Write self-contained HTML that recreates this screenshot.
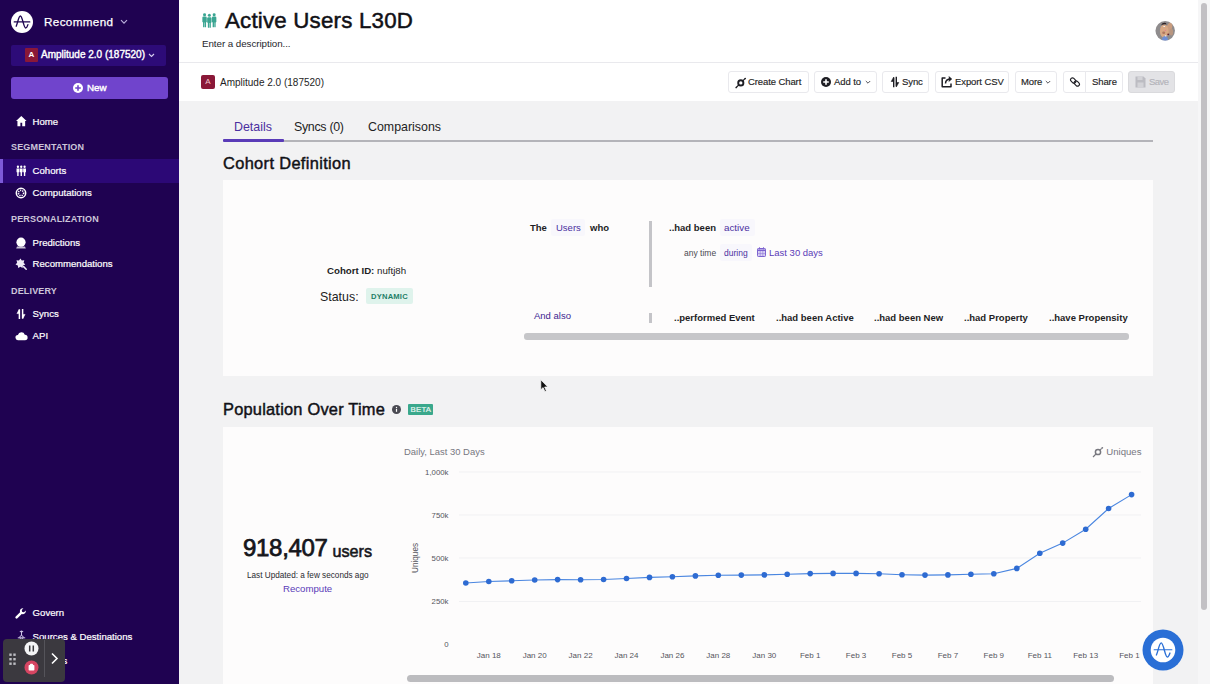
<!DOCTYPE html>
<html><head><meta charset="utf-8">
<style>
*{box-sizing:border-box;margin:0;padding:0}
html,body{width:1210px;height:684px;overflow:hidden;background:#f2f2f3;font-family:"Liberation Sans",sans-serif;color:#1e1e24}
.abs{position:absolute}
#side{position:absolute;left:0;top:0;width:179px;height:684px;background:#1f0251;color:#fff}
.nav{position:absolute;left:32.600px;font-size:9.6px;color:#fff;-webkit-text-stroke:.2px #fff;white-space:nowrap;line-height:12px}
.sec{position:absolute;left:11px;font-size:9px;font-weight:bold;color:#cdc6d9;letter-spacing:.17px;white-space:nowrap;line-height:12px}
.ico{position:absolute}
#hdr{position:absolute;left:179px;top:0;width:1019px;height:63px;background:#fff;border-bottom:1px solid #e9e9ed}
#tool{position:absolute;left:179px;top:63px;width:1019px;height:38px;background:#fff}
.btn{position:absolute;top:71px;height:22px;border:1px solid #e9e9ed;border-radius:3px;background:#fff;font-size:9.5px;letter-spacing:-.1px;-webkit-text-stroke:.15px currentColor;line-height:20px;color:#1e1e24;white-space:nowrap}
.btn span{position:absolute;top:0}
.card{position:absolute;background:#fdfcfc}
.t{position:absolute;white-space:nowrap}
</style></head><body>
<div id="side">
<!-- logo -->
<svg class="ico" style="left:11px;top:11px" width="22" height="22" viewBox="0 0 22 22"><circle cx="11" cy="11" r="11" fill="#fff"/><path d="M3.2 10.900h15.600" stroke="#1e0550" stroke-width="1.2" fill="none" stroke-linecap="round"/><path d="M5.2 15.2C6.6 12.5 7.6 5 9.4 5c2 0 3.3 12 5.3 12 .9 0 1.6-1.6 2.2-3.4" stroke="#1e0550" stroke-width="1.3" fill="none" stroke-linecap="round"/></svg>
<div class="t" style="left:44px;top:13px;font-size:11.7px;line-height:18px;color:#fff;letter-spacing:.35px;-webkit-text-stroke:.25px #fff">Recommend</div>
<svg class="ico" style="left:120px;top:19px" width="8" height="6" viewBox="0 0 8 6"><path d="M1 1.2l3 3 3-3" stroke="#b9aedb" stroke-width="1.2" fill="none"/></svg>
<!-- project -->
<div class="abs" style="left:11px;top:44.500px;width:155px;height:21px;background:#2d0b78;border-radius:2px"></div>
<div class="abs" style="left:25px;top:48px;width:13px;height:14px;background:#8a1838;border-radius:1px;color:#fff;font-size:8px;line-height:14px;text-align:center;font-weight:bold">A</div>
<div class="t" style="left:41px;top:48px;font-size:10px;line-height:14px;color:#fff;-webkit-text-stroke:.4px #fff">Amplitude 2.0 (187520)</div>
<svg class="ico" style="left:148px;top:53px" width="7" height="5" viewBox="0 0 7 5"><path d="M1 1l2.5 2.5L6 1" stroke="#d6cdf0" stroke-width="1.1" fill="none"/></svg>
<!-- new -->
<div class="abs" style="left:11px;top:77px;width:157px;height:22px;background:#7044cc;border-radius:3px"></div>
<svg class="ico" style="left:73px;top:83px" width="10" height="10" viewBox="0 0 10 10"><circle cx="5" cy="5" r="5" fill="#fff"/><path d="M5 2.2v5.6M2.2 5h5.6" stroke="#7044cc" stroke-width="1.6"/></svg>
<div class="t" style="left:87px;top:82px;font-size:9.800px;line-height:12px;color:#fff;-webkit-text-stroke:.4px #fff">New</div>
<!-- nav -->
<svg class="ico" style="left:15px;top:115px" width="12.600" height="12.200" viewBox="0 0 12 12"><path d="M6 1L.8 5.8h1.4V11h2.9V7.6h1.8V11h2.9V5.8h1.4z" fill="#fff"/></svg>
<div class="nav" style="top:116px">Home</div>
<div class="sec" style="top:141px">SEGMENTATION</div>
<div class="abs" style="left:0;top:158.500px;width:179px;height:24px;background:#2c0876"></div>
<div class="abs" style="left:0;top:158.500px;width:3px;height:24px;background:#7d5ad8"></div>
<svg class="ico" style="left:16px;top:165px" width="10.500" height="11.500" viewBox="0 0 12 12" preserveAspectRatio="none" fill="#fff"><circle cx="2.2" cy="1.8" r="1.3"/><circle cx="6" cy="1.8" r="1.3"/><circle cx="9.8" cy="1.8" r="1.3"/><path d="M.6 3.6h3.2v4H3V11.5H1.4V7.6H.6zM4.4 3.6h3.2v4H6.8V11.5H5.2V7.6h-.8zM8.2 3.6h3.2v4h-.8V11.5H9V7.6h-.8z"/></svg>
<div class="nav" style="top:165px">Cohorts</div>
<svg class="ico" style="left:15.300px;top:186.800px" width="12" height="12" viewBox="0 0 12 12"><circle cx="6" cy="6" r="4.7" fill="none" stroke="#fff" stroke-width="1.5"/><circle cx="6" cy="6" r="2.6" fill="none" stroke="#fff" stroke-width="1.6" stroke-dasharray="1.2 1"/></svg>
<div class="nav" style="top:187px">Computations</div>
<div class="sec" style="top:213px">PERSONALIZATION</div>
<svg class="ico" style="left:15px;top:236.500px" width="12" height="12" viewBox="0 0 12 12" fill="#fff"><circle cx="6" cy="5.2" r="4.6"/><path d="M2 9.6h8l.8 2H1.2z" opacity=".75"/></svg>
<div class="nav" style="top:237px">Predictions</div>
<svg class="ico" style="left:14.800px;top:257.800px" width="13" height="13" viewBox="0 0 13 13" fill="#efeaf7"><path d="M5.40 0.40 L6.83 2.43 L9.31 2.28 L8.62 4.67 L10.27 6.51 L7.98 7.46 L7.57 9.90 L5.40 8.70 L3.23 9.90 L2.82 7.46 L0.53 6.51 L2.18 4.67 L1.49 2.28 L3.97 2.43z"/><path d="M8.600 8.600l2.600 2.600" stroke="#efeaf7" stroke-width="1.500" stroke-linecap="round"/></svg>
<div class="nav" style="top:258px">Recommendations</div>
<div class="sec" style="top:285px">DELIVERY</div>
<svg class="ico" style="left:15px;top:307.500px" width="12" height="12" viewBox="0 0 12 12" fill="none" stroke="#fff" stroke-width="1.500"><path d="M4.400 11V1.500"/><path d="M4.300 1.300V5.600H1.900z" fill="#fff" stroke-width=".5"/><path d="M7.600 1v9.500"/><path d="M7.700 10.700V6.400h2.400z" fill="#fff" stroke-width=".5"/></svg>
<div class="nav" style="top:308px">Syncs</div>
<svg class="ico" style="left:15px;top:330px" width="13" height="12" viewBox="0 0 13 12" fill="#fff"><path d="M3.200 10.200a2.600 2.600 0 0 1-.3-5.200 3.600 3.600 0 0 1 6.900-.2 2.700 2.700 0 0 1 .2 5.400z"/></svg>
<div class="nav" style="top:330px">API</div>
<svg class="ico" style="left:15px;top:607px" width="12" height="12" viewBox="0 0 12 12"><path d="M1.600 10.400L6.400 5.600" stroke="#fff" stroke-width="2.400" stroke-linecap="round"/><path d="M8.400 1.200a3 3 0 1 0 2.400 2.400L9 5.200 7 5l-.2-2z" fill="#fff"/></svg>
<div class="nav" style="top:607px">Govern</div>
<svg class="ico" style="left:16px;top:629px" width="11" height="11" viewBox="0 0 11 11" fill="none" stroke="#cfc6e6" stroke-width="1"><path d="M3.800 2.600h3.400M5.500 2.600v4M1.800 8.800h7.400"/><circle cx="5.500" cy="2.600" r="1" fill="#cfc6e6" stroke="none"/><circle cx="5.500" cy="8.300" r="1.700"/></svg>
<div class="nav" style="top:631px">Sources &amp; Destinations</div>
<div class="nav" style="top:655px">Settings</div>
<!-- recorder widget -->
<div class="abs" style="left:2.500px;top:638.500px;width:62px;height:43.500px;background:#3b393f;border-radius:4px"></div>
<div class="abs" style="left:44px;top:640px;width:1px;height:37px;background:#55545a"></div>
<svg class="ico" style="left:9px;top:653px" width="8" height="13" viewBox="0 0 8 13" fill="#bdbdc2"><rect x=".3" y=".5" width="2.400" height="2.400"/><rect x="4.300" y=".5" width="2.400" height="2.400"/><rect x=".3" y="5" width="2.400" height="2.400"/><rect x="4.300" y="5" width="2.400" height="2.400"/><rect x=".3" y="9.500" width="2.400" height="2.400"/><rect x="4.300" y="9.500" width="2.400" height="2.400"/></svg>
<svg class="ico" style="left:24px;top:641px" width="15" height="15" viewBox="0 0 15 15"><circle cx="7.500" cy="7.500" r="7" fill="#f4f4f6"/><path d="M5.700 4.600v5.800M9.300 4.600v5.800" stroke="#3b3a3e" stroke-width="1.500"/></svg>
<svg class="ico" style="left:24px;top:660px" width="15" height="15" viewBox="0 0 15 15"><circle cx="7.500" cy="7.500" r="7" fill="#d64562"/><rect x="4.600" y="5" width="5.800" height="5.600" rx=".8" fill="#fff"/><rect x="6" y="3.800" width="3" height="2" rx=".8" fill="#fff"/></svg>
<svg class="ico" style="left:50px;top:652px" width="9" height="13" viewBox="0 0 9 13"><path d="M2 1.500l5 5-5 5" stroke="#fff" stroke-width="1.600" fill="none"/></svg>
</div>
<div id="hdr"></div>
<div id="tool"></div>
<!-- header -->
<svg class="ico" style="left:202px;top:13.300px" width="15" height="15.200" viewBox="0 0 15 15.200" fill="#3aa592"><circle cx="2.55" cy="1.7" r="1.500"/><rect x="0.35" y="3.6" width="4.400" height="5.800" rx="1.200"/><rect x="1.05" y="8" width="1.350" height="6.200" rx=".5"/><rect x="2.70" y="8" width="1.350" height="6.200" rx=".5"/><circle cx="7.35" cy="2.3" r="1.500"/><rect x="5.15" y="4.2" width="4.400" height="5.800" rx="1.200"/><rect x="5.85" y="8.6" width="1.350" height="6.200" rx=".5"/><rect x="7.50" y="8.6" width="1.350" height="6.200" rx=".5"/><circle cx="12.15" cy="1.7" r="1.500"/><rect x="9.95" y="3.6" width="4.400" height="5.800" rx="1.200"/><rect x="10.65" y="8" width="1.350" height="6.200" rx=".5"/><rect x="12.30" y="8" width="1.350" height="6.200" rx=".5"/></svg>
<div class="t" style="left:225px;top:5.500px;font-size:22.300px;line-height:30px;letter-spacing:.2px;color:#111116;-webkit-text-stroke:.5px #111116">Active Users L30D</div>
<div class="t" style="left:202px;top:38px;font-size:9.800px;line-height:12px;letter-spacing:-.06px;color:#26262c">Enter a description...</div>
<svg class="ico" style="left:1155px;top:21px" width="20" height="20" viewBox="0 0 20 20"><defs><clipPath id="av"><circle cx="10.200" cy="9.800" r="9.750"/></clipPath></defs><g clip-path="url(#av)"><rect width="20" height="20" fill="#8f8c8d"/><ellipse cx="14" cy="7.500" rx="2.800" ry="6.500" transform="rotate(18 14 7.500)" fill="#c99c7e"/><ellipse cx="16.300" cy="11" rx="1.800" ry="3.500" fill="#b89680"/><ellipse cx="9.200" cy="10" rx="4.300" ry="6.600" fill="#d8a884"/><ellipse cx="8.700" cy="11.800" rx="1.500" ry="1.300" fill="#b07860"/><path d="M6.300 4.200c.3-2 2.200-2.700 3.600-2.500 1 .1 1.600.9 1.500 1.900-1.500-.5-3.500-.3-5.100.6z" fill="#2e2226"/><rect x="8.200" y="5" width="2" height="1" rx=".4" fill="#f0eeee"/><circle cx="10.300" cy="9.300" r=".6" fill="#e8709c"/><circle cx="13.200" cy="13.300" r=".9" fill="#6a1c2c"/><path d="M6.800 20c0-3.200 1.500-5 3.300-5s3 1.600 3 5z" fill="#6f8fd6"/><rect x="9.800" y="14.300" width="1.600" height="1.200" rx=".4" fill="#ecebf2"/></g></svg>
<!-- toolbar -->
<div class="abs" style="left:201px;top:75px;width:14px;height:14px;background:#8a1838;border-radius:2px;color:#f3c9d2;font-size:8px;line-height:14px;text-align:center">A</div>
<div class="t" style="left:220px;top:77px;font-size:10px;line-height:12px;color:#1e1e24">Amplitude 2.0 (187520)</div>
<div class="btn" style="left:728px;width:81px"><svg class="ico" style="left:5.500px;top:4.500px" width="12" height="12" viewBox="0 0 12 12" fill="none" stroke="#1e1e24"><circle cx="5.800" cy="5.900" r="2.600" stroke-width="1.900"/><path d="M1.200 10.500l2.600-2.600M7.800 3.900L10 1.700" stroke-width="1.200"/><circle cx="10.200" cy="1.500" r=".85" fill="#1e1e24" stroke="none"/><circle cx="1.200" cy="10.500" r=".85" fill="#1e1e24" stroke="none"/></svg><span style="left:19px">Create Chart</span></div>
<div class="btn" style="left:814px;width:63px"><svg class="ico" style="left:6px;top:5px" width="10" height="10" viewBox="0 0 10 10"><circle cx="5" cy="5" r="5" fill="#1e1e24"/><path d="M5 2.200v5.600M2.200 5h5.600" stroke="#fff" stroke-width="1.600"/></svg><span style="left:19px">Add to</span><svg class="ico" style="left:50px;top:8px" width="6" height="5" viewBox="0 0 6 5"><path d="M.8 1l2.200 2.200L5.200 1" stroke="#55555c" stroke-width="1" fill="none"/></svg></div>
<div class="btn" style="left:882px;width:47px"><svg class="ico" style="left:6.500px;top:4px" width="10" height="12" viewBox="0 0 10 12" fill="#1e1e24" stroke="#1e1e24" stroke-width="1.400"><path d="M3.700 11.300V1.500" fill="none"/><path d="M3.600 1.200V5.500H1.200z" stroke-width=".6"/><path d="M6.300 .7v9.800" fill="none"/><path d="M6.400 10.800V6.500H8.800z" stroke-width=".6"/></svg><span style="left:19px">Sync</span></div>
<div class="btn" style="left:935px;width:74px"><svg class="ico" style="left:5px;top:4px" width="12" height="12" viewBox="0 0 12 12" fill="none" stroke="#1e1e24" stroke-width="1.500" stroke-linejoin="round"><path d="M4.500 2H1.200v8.800H10V7.500"/><path d="M4.500 7.500C4.500 4.500 6.500 3 10 3"/><path d="M7.800 .6L10.600 3 7.800 5.400" fill="#1e1e24" stroke-width="1"/></svg><span style="left:19px">Export CSV</span></div>
<div class="btn" style="left:1015px;width:42px"><span style="left:5px">More</span><svg class="ico" style="left:29px;top:8px" width="6" height="5" viewBox="0 0 6 5"><path d="M.8 1l2.200 2.200L5.200 1" stroke="#55555c" stroke-width="1" fill="none"/></svg></div>
<div class="btn" style="left:1063px;width:23px;border-radius:3px 0 0 3px"><svg class="ico" style="left:5px;top:4px" width="12" height="12" viewBox="0 0 12 12" fill="none" stroke="#1e1e24" stroke-width="1.150"><rect x="1.300" y="2.600" width="5.800" height="3.800" rx="1.900" transform="rotate(45 4.200 4.500)"/><rect x="4.900" y="5.600" width="5.800" height="3.800" rx="1.900" transform="rotate(45 7.800 7.500)"/></svg></div>
<div class="btn" style="left:1085px;width:38px;border-radius:0 3px 3px 0"><span style="left:6px">Share</span></div>
<div class="btn" style="left:1128px;width:47px;background:#e3e3e6;border-color:#dadadd;color:#b4b4ba;letter-spacing:-.5px"><svg class="ico" style="left:6px;top:4px" width="11" height="12" viewBox="0 0 11 12"><path d="M.5 .5h8l2 2v9H.5z" fill="#bcbcc2"/><rect x="2.500" y=".5" width="5" height="3.500" fill="#d3d3d7"/><rect x="2.500" y="6.500" width="6" height="5" fill="#d3d3d7"/></svg><span style="left:20px">Save</span></div>
<!-- page scrollbar -->
<div class="abs" style="left:1198px;top:0;width:12px;height:684px;background:#f6f6f7"></div>
<div class="abs" style="left:1200.500px;top:3px;width:6.500px;height:607px;background:#c2c0c4;border-radius:3.500px"></div>
<!-- tabs -->
<div class="t" style="left:234px;top:119px;font-size:12.4px;line-height:16px;color:#4b2fa0">Details</div>
<div class="t" style="left:294px;top:119px;font-size:12.4px;line-height:16px;letter-spacing:-.3px;color:#1e1e24">Syncs (0)</div>
<div class="t" style="left:368px;top:119px;font-size:12.4px;line-height:16px;color:#1e1e24">Comparisons</div>
<div class="abs" style="left:283px;top:140px;width:870px;height:1.500px;background:#b4b4b9"></div>
<div class="abs" style="left:223px;top:138.500px;width:60.500px;height:3px;background:#5a3bb8;border-radius:1px"></div>
<div class="t" style="left:223px;top:152px;font-size:16.400px;line-height:22px;letter-spacing:.35px;color:#111116;-webkit-text-stroke:.45px #111116">Cohort Definition</div>
<div class="card" style="left:223px;top:179.500px;width:930px;height:196.500px"></div>
<div class="t" style="left:327px;top:264.500px;font-size:9.700px;line-height:12px;color:#1e1e24"><b>Cohort ID:</b> nuftj8h</div>
<div class="t" style="left:320px;top:288.500px;font-size:12.400px;line-height:16px;color:#1e1e24">Status:</div>
<div class="abs" style="left:365.500px;top:288px;width:47px;height:16px;background:#dff3ec;border-radius:2px"></div>
<div class="t" style="left:371px;top:290.500px;font-size:7.600px;line-height:11px;color:#1e7f68;font-weight:bold;letter-spacing:.2px">DYNAMIC</div>
<div class="t" style="left:530px;top:222px;font-size:9.500px;line-height:12px;font-weight:bold;color:#1e1e24">The</div>
<div class="abs" style="left:551px;top:219px;width:34px;height:17px;background:#f8f7fc;border-radius:2px"></div>
<div class="t" style="left:556px;top:222px;font-size:9.500px;line-height:12px;color:#4b2fa0">Users</div>
<div class="t" style="left:590px;top:222px;font-size:9.500px;line-height:12px;font-weight:bold;color:#1e1e24">who</div>
<div class="abs" style="left:649px;top:221px;width:3px;height:66px;background:#c4c4c8"></div>
<div class="t" style="left:669px;top:222px;font-size:9.500px;line-height:12px;font-weight:bold;color:#1e1e24">..had been</div>
<div class="abs" style="left:720px;top:219px;width:35px;height:17px;background:#f8f7fc;border-radius:2px"></div>
<div class="t" style="left:724px;top:222px;font-size:9.800px;line-height:12px;color:#4b2fa0">active</div>
<div class="t" style="left:684px;top:248px;font-size:8.500px;line-height:11px;color:#4a4a52">any time</div>
<div class="abs" style="left:720px;top:244px;width:32px;height:17px;background:#f8f7fc;border-radius:2px"></div>
<div class="t" style="left:724px;top:248px;font-size:8.500px;line-height:11px;color:#4b2fa0">during</div>
<svg class="ico" style="left:757px;top:247px" width="9" height="10" viewBox="0 0 9 10"><rect x=".5" y="1.500" width="8" height="8" rx=".8" fill="#d9d1f3" stroke="#7c62cf" stroke-width="1"/><path d="M.5 3.300h8" stroke="#7c62cf" stroke-width="1.400"/><path d="M2.500 .3v2M6.500 .3v2" stroke="#7c62cf" stroke-width="1"/><path d="M3.200 4v5.500M5.800 4v5.500M.5 6.600h8" stroke="#8f78d8" stroke-width=".6"/></svg>
<div class="t" style="left:769px;top:247px;font-size:9.500px;line-height:12px;color:#5a3bb8">Last 30 days</div>
<div class="t" style="left:534px;top:310px;font-size:9.500px;line-height:12px;color:#3c2590">And also</div>
<div class="abs" style="left:649px;top:313px;width:3px;height:10px;background:#c4c4c8"></div>
<div class="t" style="left:674px;top:312px;font-size:9.500px;line-height:12px;font-weight:bold;color:#1e1e24">..performed Event</div>
<div class="t" style="left:776px;top:312px;font-size:9.500px;line-height:12px;font-weight:bold;color:#1e1e24">..had been Active</div>
<div class="t" style="left:874px;top:312px;font-size:9.500px;line-height:12px;font-weight:bold;color:#1e1e24">..had been New</div>
<div class="t" style="left:964px;top:312px;font-size:9.500px;line-height:12px;font-weight:bold;color:#1e1e24">..had Property</div>
<div class="t" style="left:1049px;top:312px;font-size:9.500px;line-height:12px;font-weight:bold;color:#1e1e24">..have Propensity</div>
<div class="abs" style="left:524px;top:333px;width:605px;height:7px;background:#c6c6c9;border-radius:3px"></div>
<!-- cursor -->
<svg class="ico" style="left:540px;top:379px" width="9" height="14" viewBox="0 0 9 14"><path d="M.8 .8v10l2.300-2.200 1.800 4 1.500-.7-1.800-3.900h3.200z" fill="#111" stroke="#fff" stroke-width=".7"/></svg>
<!-- population -->
<div class="t" style="left:223px;top:398px;font-size:16.400px;line-height:22px;letter-spacing:.22px;color:#111116;-webkit-text-stroke:.45px #111116">Population Over Time</div>
<svg class="ico" style="left:392px;top:405px" width="9" height="9" viewBox="0 0 9 9"><circle cx="4.500" cy="4.500" r="4.500" fill="#4a4a52"/><path d="M4.500 3.800v3" stroke="#fff" stroke-width="1.200"/><circle cx="4.500" cy="2.400" r=".7" fill="#fff"/></svg>
<div class="abs" style="left:408px;top:404px;width:25px;height:11px;background:#3aa88c;border-radius:1px"></div>
<div class="t" style="left:410.500px;top:403.500px;font-size:7.800px;line-height:11px;color:#e9f7f2;letter-spacing:.25px;-webkit-text-stroke:.2px #e9f7f2">BETA</div>
<div class="card" style="left:223px;top:427px;width:930px;height:257px"></div>
<div class="t" style="left:243px;top:534px;font-size:24px;line-height:28px;color:#16161b;-webkit-text-stroke:.75px #16161b;letter-spacing:-.3px">918,407</div>
<div class="t" style="left:332.500px;top:539.500px;font-size:16.200px;line-height:22px;color:#16161b;-webkit-text-stroke:.55px #16161b">users</div>
<div class="t" style="left:247px;top:570.500px;font-size:8.200px;line-height:10px;color:#2a2a30">Last Updated: a few seconds ago</div>
<div class="t" style="left:283px;top:583px;font-size:9.650px;line-height:12px;color:#5a3bb8">Recompute</div>
<svg class="ico" style="left:0;top:0" width="1210" height="684" viewBox="0 0 1210 684" font-family="Liberation Sans, sans-serif">
<path d="M459 472H1141" stroke="#f1f1f3" stroke-width="1"/>
<path d="M459 515H1141" stroke="#f1f1f3" stroke-width="1"/>
<path d="M459 558H1141" stroke="#f1f1f3" stroke-width="1"/>
<path d="M459 601.5H1141" stroke="#f1f1f3" stroke-width="1"/>
<path d="M465.8 583.0 L488.8 581.5 L511.7 580.8 L534.7 580.0 L557.6 579.6 L580.6 579.8 L603.6 579.5 L626.5 578.5 L649.5 577.4 L672.4 576.7 L695.4 575.9 L718.3 575.3 L741.3 575.1 L764.3 574.9 L787.2 574.3 L810.2 573.6 L833.1 573.4 L856.1 573.4 L879.1 573.8 L902.0 574.7 L925.0 575.1 L947.9 574.9 L970.9 574.3 L993.8 573.8 L1016.8 568.4 L1039.8 553.2 L1062.7 543.1 L1085.7 529.2 L1108.6 508.5 L1131.6 494.6" fill="none" stroke="#4a86e0" stroke-width="1.1"/>
<circle cx="465.8" cy="583.0" r="2.800" fill="#2e6bd2"/>
<circle cx="488.8" cy="581.5" r="2.800" fill="#2e6bd2"/>
<circle cx="511.7" cy="580.8" r="2.800" fill="#2e6bd2"/>
<circle cx="534.7" cy="580.0" r="2.800" fill="#2e6bd2"/>
<circle cx="557.6" cy="579.6" r="2.800" fill="#2e6bd2"/>
<circle cx="580.6" cy="579.8" r="2.800" fill="#2e6bd2"/>
<circle cx="603.6" cy="579.5" r="2.800" fill="#2e6bd2"/>
<circle cx="626.5" cy="578.5" r="2.800" fill="#2e6bd2"/>
<circle cx="649.5" cy="577.4" r="2.800" fill="#2e6bd2"/>
<circle cx="672.4" cy="576.7" r="2.800" fill="#2e6bd2"/>
<circle cx="695.4" cy="575.9" r="2.800" fill="#2e6bd2"/>
<circle cx="718.3" cy="575.3" r="2.800" fill="#2e6bd2"/>
<circle cx="741.3" cy="575.1" r="2.800" fill="#2e6bd2"/>
<circle cx="764.3" cy="574.9" r="2.800" fill="#2e6bd2"/>
<circle cx="787.2" cy="574.3" r="2.800" fill="#2e6bd2"/>
<circle cx="810.2" cy="573.6" r="2.800" fill="#2e6bd2"/>
<circle cx="833.1" cy="573.4" r="2.800" fill="#2e6bd2"/>
<circle cx="856.1" cy="573.4" r="2.800" fill="#2e6bd2"/>
<circle cx="879.1" cy="573.8" r="2.800" fill="#2e6bd2"/>
<circle cx="902.0" cy="574.7" r="2.800" fill="#2e6bd2"/>
<circle cx="925.0" cy="575.1" r="2.800" fill="#2e6bd2"/>
<circle cx="947.9" cy="574.9" r="2.800" fill="#2e6bd2"/>
<circle cx="970.9" cy="574.3" r="2.800" fill="#2e6bd2"/>
<circle cx="993.8" cy="573.8" r="2.800" fill="#2e6bd2"/>
<circle cx="1016.8" cy="568.4" r="2.800" fill="#2e6bd2"/>
<circle cx="1039.8" cy="553.2" r="2.800" fill="#2e6bd2"/>
<circle cx="1062.7" cy="543.1" r="2.800" fill="#2e6bd2"/>
<circle cx="1085.7" cy="529.2" r="2.800" fill="#2e6bd2"/>
<circle cx="1108.6" cy="508.5" r="2.800" fill="#2e6bd2"/>
<circle cx="1131.6" cy="494.6" r="2.800" fill="#2e6bd2"/>
<text x="448.5" y="474.8" font-size="7.8" fill="#55555c" text-anchor="end">1,000k</text>
<text x="448.5" y="518.1999999999999" font-size="7.8" fill="#55555c" text-anchor="end">750k</text>
<text x="448.5" y="561.3" font-size="7.8" fill="#55555c" text-anchor="end">500k</text>
<text x="448.5" y="604.4" font-size="7.8" fill="#55555c" text-anchor="end">250k</text>
<text x="448.5" y="647.4" font-size="7.8" fill="#55555c" text-anchor="end">0</text>
<defs><clipPath id="cc"><rect x="400" y="430" width="739.500" height="240"/></clipPath></defs><g clip-path="url(#cc)">
<text x="488.8" y="657.9" font-size="8" fill="#55555c" text-anchor="middle">Jan 18</text>
<text x="534.7" y="657.9" font-size="8" fill="#55555c" text-anchor="middle">Jan 20</text>
<text x="580.6" y="657.9" font-size="8" fill="#55555c" text-anchor="middle">Jan 22</text>
<text x="626.5" y="657.9" font-size="8" fill="#55555c" text-anchor="middle">Jan 24</text>
<text x="672.4" y="657.9" font-size="8" fill="#55555c" text-anchor="middle">Jan 26</text>
<text x="718.3" y="657.9" font-size="8" fill="#55555c" text-anchor="middle">Jan 28</text>
<text x="764.3" y="657.9" font-size="8" fill="#55555c" text-anchor="middle">Jan 30</text>
<text x="810.2" y="657.9" font-size="8" fill="#55555c" text-anchor="middle">Feb 1</text>
<text x="856.1" y="657.9" font-size="8" fill="#55555c" text-anchor="middle">Feb 3</text>
<text x="902.0" y="657.9" font-size="8" fill="#55555c" text-anchor="middle">Feb 5</text>
<text x="947.9" y="657.9" font-size="8" fill="#55555c" text-anchor="middle">Feb 7</text>
<text x="993.8" y="657.9" font-size="8" fill="#55555c" text-anchor="middle">Feb 9</text>
<text x="1039.8" y="657.9" font-size="8" fill="#55555c" text-anchor="middle">Feb 11</text>
<text x="1085.7" y="657.9" font-size="8" fill="#55555c" text-anchor="middle">Feb 13</text>
<text x="1131.6" y="657.9" font-size="8" fill="#55555c" text-anchor="middle">Feb 15</text>
</g>
<text transform="translate(417.6 558) rotate(-90)" font-size="8.2" fill="#55555c" text-anchor="middle">Uniques</text>
<text x="404" y="454.6" font-size="9.45" fill="#77777f">Daily, Last 30 Days</text>
<text x="1141.5" y="455" font-size="9.6" fill="#77777f" text-anchor="end">Uniques</text>
<g fill="none" stroke="#77777e"><circle cx="1098" cy="452" r="2.6" stroke-width="1.5"/><path d="M1093 457l3-3M1100.200 449.800l1.500-1.500" stroke-width="1.200"/></g><circle cx="1102.300" cy="447.800" r=".9" fill="#77777e"/>
</svg>
<div class="abs" style="left:406.500px;top:674.500px;width:707px;height:7px;background:#bcbcbf;border-radius:3.500px"></div>
<!-- chat bubble -->
<svg class="ico" style="left:1140.700px;top:627.500px" width="44" height="44" viewBox="0 0 44 44"><circle cx="22" cy="22" r="20.500" fill="#2a6fd6"/><circle cx="22" cy="22" r="12.300" fill="#fff"/><g transform="translate(22 22) scale(1.18) translate(-22 -22)"><path d="M14.500 21.800h15" stroke="#2a6fd6" stroke-width="1" fill="none" stroke-linecap="round"/><path d="M16.400 26.200C17.800 23.500 18.800 16 20.500 16c2 0 3.200 12 5.200 12 .9 0 1.600-1.600 2.200-3.400" stroke="#2a6fd6" stroke-width="1.150" fill="none" stroke-linecap="round"/></g></svg>

</body></html>
